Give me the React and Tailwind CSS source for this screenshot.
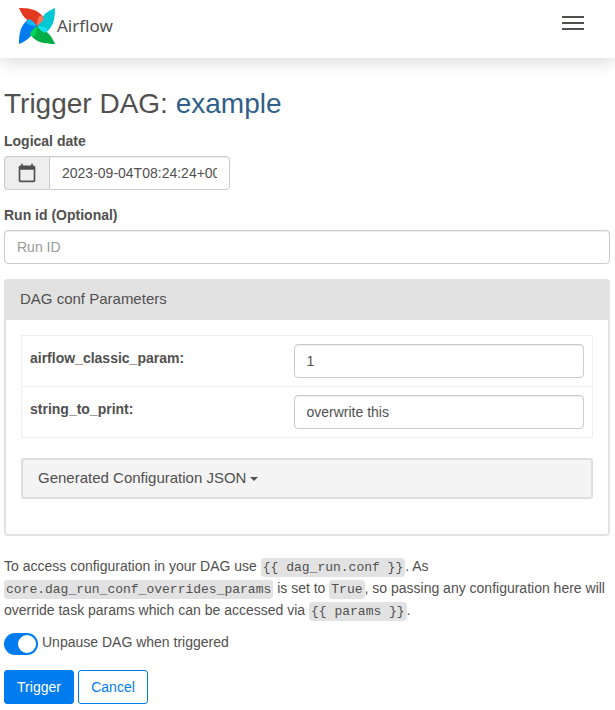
import { useState } from 'react';

const bladeShape = 'M0 0 C7 0 14 .6 19 4 C21.5 5.8 23 7.2 24.3 9 L18 18 C15 16.5 11 15 8 11.8 C4.5 9 2 5 0 0 Z';
const foldShape = 'M20.5 8 C21.5 7.5 23 7.6 24.3 9 C26 11 22 15 18 18 C18 14 18.6 10.5 20.5 8 Z';

const blades = [
  { angle: 0, main: '#e43921', fold: '#ff7557' },
  { angle: 90, main: '#00c7d4', fold: '#11e1ee' },
  { angle: 180, main: '#00ad46', fold: '#04d659' },
  { angle: 270, main: '#017cee', fold: '#0cb6ff' },
];

function Logo() {
  return (
    <a href="#" className="flex items-center gap-[2px] text-[#51504f]">
      <svg className="size-9" viewBox="0 0 36 36" aria-hidden="true">
        {blades.map((b) => (
          <path key={b.main} d={bladeShape} fill={b.main} transform={`rotate(${b.angle} 18 18)`} />
        ))}
        {blades.map((b) => (
          <path key={b.fold} d={foldShape} fill={b.fold} transform={`rotate(${b.angle} 18 18)`} />
        ))}
        <circle cx="18" cy="18" r=".8" fill="#51504f" />
      </svg>
      <span className="font-['Noto_Sans',sans-serif] text-[17px] leading-6">Airflow</span>
    </a>
  );
}

const fieldClass =
  'block h-[34px] w-full min-w-0 rounded border border-[#cbcbcb] bg-white px-3 text-sm text-[#51504f] shadow-[inset_0_1px_1px_rgba(0,0,0,0.075)] placeholder:text-[#999]';

function Code({ children }) {
  return (
    <code className="rounded bg-[#e2e2e2] px-[2px] py-[2px] font-['Liberation_Mono',monospace] text-[13px] leading-4">
      {children}
    </code>
  );
}

const params = [
  { name: 'airflow_classic_param', value: '1' },
  { name: 'string_to_print', value: 'overwrite this' },
];

export default function App() {
  const [unpause, setUnpause] = useState(true);

  return (
    <div className="font-['Liberation_Sans',Arial,sans-serif] text-sm text-[#51504f]">
      <header className="flex h-[58px] items-center justify-between bg-white pr-[31px] pb-[6px] pl-[19px] shadow-[0_4px_16px_rgba(0,0,0,0.15)]">
        <Logo />
        <button type="button" aria-label="Toggle navigation" className="flex w-[22px] flex-col gap-1 pb-[6px]">
          <span className="h-[2px] w-full bg-[#51504f]" />
          <span className="h-[2px] w-full bg-[#51504f]" />
          <span className="h-[2px] w-full bg-[#51504f]" />
        </button>
      </header>

      <main className="pt-[30px] pr-[5px] pb-1 pl-1">
        <h2 className="text-[28px] leading-8 font-medium">
          Trigger DAG:{' '}
          <a href="#" className="text-[#2f5f8a]">
            example
          </a>
        </h2>

        <form onSubmit={(e) => e.preventDefault()}>
          <label htmlFor="date" className="mt-[11px] mb-[5px] block leading-5 font-bold">
            Logical date
          </label>
          <div className="flex w-[226px]">
            <span className="flex w-[45px] shrink-0 items-center justify-center rounded-l border border-r-0 border-[#cbcbcb] bg-[#eee]">
              <svg className="size-5" viewBox="0 0 24 24" fill="#51504f" aria-hidden="true">
                <path d="M20 3h-1V1h-2v2H7V1H5v2H4c-1.1 0-2 .9-2 2v16c0 1.1.9 2 2 2h16c1.1 0 2-.9 2-2V5c0-1.1-.9-2-2-2zm0 18H4V8h16v13z" />
              </svg>
            </span>
            <input id="date" className={`${fieldClass} rounded-l-none`} defaultValue="2023-09-04T08:24:24+00:00" />
          </div>

          <label htmlFor="run-id" className="mt-[15px] mb-[5px] block leading-5 font-bold">
            Run id (Optional)
          </label>
          <input id="run-id" className={fieldClass} placeholder="Run ID" />

          <section className="mt-[15px] rounded border-2 border-[#e2e2e2] pb-[35px]">
            <h4 className="bg-[#e2e2e2] px-[14px] pt-2 pb-[11px] text-[15px] leading-5 font-medium">
              DAG conf Parameters
            </h4>
            <div className="px-[15px] pt-[15px]">
              <table className="w-full border-collapse border border-[#eee]">
                <tbody>
                  {params.map((p) => (
                    <tr key={p.name} className="border border-[#eee]">
                      <td className="p-2 pt-3 align-top">
                        <label htmlFor={p.name} className="block leading-5 font-bold">
                          {p.name}:
                        </label>
                      </td>
                      <td className="w-[307px] p-2">
                        <input id={p.name} className={fieldClass} defaultValue={p.value} />
                      </td>
                    </tr>
                  ))}
                </tbody>
              </table>

              <button
                type="button"
                className="mt-5 flex h-[41px] w-full items-center gap-1 rounded-[3px] border-2 border-[#dedede] bg-[#f4f4f4] px-[15px] pb-[2px] text-[15px] font-medium"
              >
                Generated Configuration JSON
                <span className="mt-[2px] border-x-4 border-t-4 border-x-transparent border-t-[#51504f]" />
              </button>
            </div>
          </section>

          <p className="mt-[19px] leading-[22px]">
            To access configuration in your DAG use <Code>{'{{ dag_run.conf }}'}</Code>. As{' '}
            <Code>core.dag_run_conf_overrides_params</Code> is set to <Code>True</Code>, so passing any
            configuration here will override task params which can be accessed via{' '}
            <Code>{'{{ params }}'}</Code>.
          </p>

          <label className="mt-[11px] flex items-center gap-1">
            <input
              type="checkbox"
              role="switch"
              checked={unpause}
              onChange={(e) => setUnpause(e.target.checked)}
              className="flex h-[22px] w-[34px] appearance-none items-center rounded-full bg-[#cbcbcb] p-[2px] before:size-[18px] before:rounded-full before:bg-white checked:justify-end checked:bg-[#017cee]"
            />
            <span className="pb-1 leading-5">Unpause DAG when triggered</span>
          </label>

          <div className="mt-[14px] flex gap-1">
            <button type="submit" className="h-[34px] min-w-[70px] rounded-[3px] border border-[#017cee] bg-[#017cee] px-3 text-white">
              Trigger
            </button>
            <button type="button" className="h-[34px] min-w-[70px] rounded-[3px] border border-[#017cee] bg-white px-3 text-[#017cee]">
              Cancel
            </button>
          </div>
        </form>
      </main>
    </div>
  );
}
